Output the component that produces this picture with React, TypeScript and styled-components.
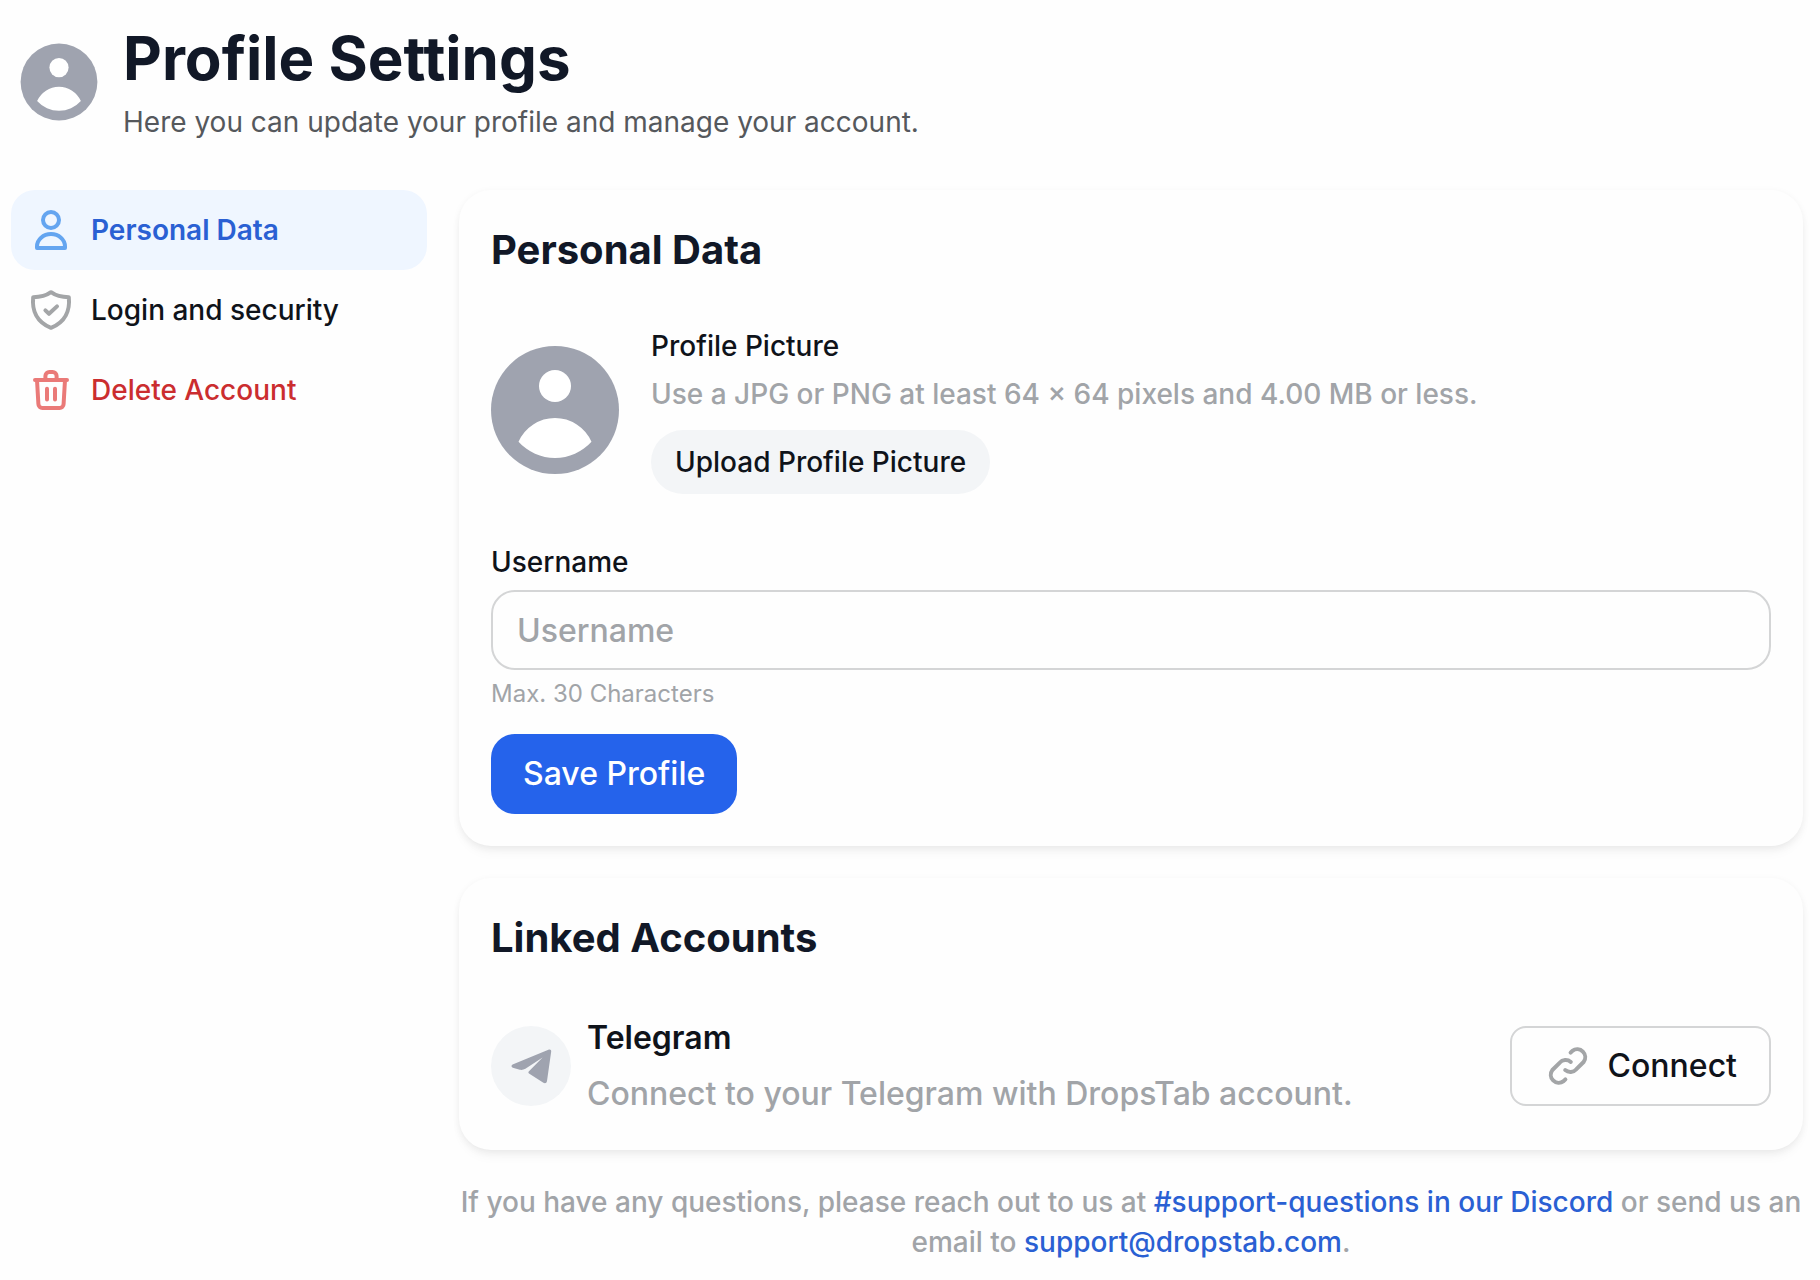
import React, { useState } from "react";
import styled, { createGlobalStyle } from "styled-components";

const color = {
  page: "#fefefe",
  ink: "#111827",
  text: "#0f131a",
  body: "#55585c",
  muted: "#a1a4a8",
  line: "#d4d5d6",
  soft: "#f3f5f7",
  avatar: "#9fa3af",
  primary: "#2563eb",
  link: "#2a60d3",
  danger: "#cb2d2f",
};

const GlobalStyle = createGlobalStyle`
  *, *::before, *::after { box-sizing: border-box; }
  body {
    margin: 0;
    background: ${color.page};
    color: ${color.text};
    font-family: Inter, "Liberation Sans", sans-serif;
    font-size: 28px;
    line-height: 40px;
  }
  h1, h2, h3, p, ul { margin: 0; padding: 0; }
  button, input { font: inherit; color: inherit; }
  svg { display: block; flex: none; }
`;

const Page = styled.div`
  display: flex;
  flex-direction: column;
  gap: 48px;
  padding: 22px 17px 18px 11px;
`;

const Header = styled.header`
  display: flex;
  align-items: center;
  gap: 16px;
`;

const Stack = styled.div`
  display: flex;
  flex-direction: column;
  align-items: flex-start;
  gap: 8px;
`;

const PageTitle = styled.h1`
  font-size: 60px;
  line-height: 72px;
  font-weight: 700;
  color: ${color.ink};
`;

const Subtitle = styled.p`
  color: ${color.body};
`;

const Columns = styled.div`
  display: grid;
  grid-template-columns: 416px minmax(0, 1fr);
  gap: 32px;
  align-items: start;
`;

const NavList = styled.ul`
  list-style: none;
`;

const NavLink = styled.a<{ $tone: string; $active?: boolean }>`
  display: flex;
  align-items: center;
  gap: 16px;
  height: 80px;
  padding: 0 16px;
  border-radius: 24px;
  background: ${({ $active }) => ($active ? "#eff6ff" : "transparent")};
  color: ${({ $tone }) => $tone};
  font-weight: ${({ $active }) => ($active ? 600 : 500)};
  text-decoration: none;
`;

const Main = styled.main`
  display: flex;
  flex-direction: column;
  gap: 32px;
`;

const Card = styled.section`
  display: flex;
  flex-direction: column;
  gap: 48px;
  padding: 32px;
  border-radius: 32px;
  background: ${color.page};
  box-shadow: 0 8px 12px -2px rgba(0, 0, 0, 0.04), 0 2px 8px -1px rgba(0, 0, 0, 0.07);
`;

const CardTitle = styled.h2`
  font-size: 40px;
  line-height: 56px;
  font-weight: 700;
  color: ${color.ink};
`;

const PictureRow = styled.div`
  display: flex;
  align-items: center;
  gap: 32px;
`;

const Label = styled.label`
  font-weight: 500;
`;

const FieldTitle = styled.h3`
  font-size: 28px;
  line-height: 40px;
  font-weight: 500;
`;

const Muted = styled.p`
  color: ${color.muted};
  font-weight: 500;
`;

const PillButton = styled.button`
  height: 64px;
  margin-top: 8px;
  padding: 0 24px;
  border: 0;
  border-radius: 32px;
  background: ${color.soft};
  font-weight: 500;
`;

const Form = styled.form`
  display: flex;
  flex-direction: column;
  align-items: flex-start;
  gap: 8px;
`;

const TextInput = styled.input`
  width: 100%;
  height: 80px;
  padding: 0 24px;
  border: 2px solid ${color.line};
  border-radius: 24px;
  background: transparent;
  font-size: 32px;
  font-weight: 500;
  outline: none;
  &::placeholder {
    color: ${color.muted};
    opacity: 1;
  }
  &:focus-visible {
    border-color: ${color.primary};
  }
`;

const Hint = styled.p`
  font-size: 24px;
  line-height: 32px;
  color: ${color.muted};
`;

const PrimaryButton = styled.button`
  height: 80px;
  margin-top: 16px;
  padding: 0 32px;
  border: 0;
  border-radius: 24px;
  background: ${color.primary};
  color: #fff;
  font-size: 32px;
  font-weight: 500;
`;

const AccountRow = styled.div`
  display: flex;
  align-items: center;
  gap: 16px;
`;

const AccountBadge = styled.div`
  display: grid;
  place-items: center;
  width: 80px;
  height: 80px;
  border-radius: 50%;
  background: ${color.soft};
`;

const AccountText = styled(Stack)`
  flex: 1;
  font-size: 32px;
  line-height: 48px;
`;

const AccountName = styled.h3`
  font-size: 32px;
  line-height: 48px;
  font-weight: 600;
`;

const OutlineButton = styled.button`
  display: flex;
  align-items: center;
  gap: 16px;
  height: 80px;
  padding: 0 32px;
  border: 2px solid ${color.line};
  border-radius: 16px;
  background: transparent;
  font-size: 32px;
  font-weight: 500;
`;

const Support = styled.p`
  color: ${color.muted};
  font-weight: 500;
  text-align: center;
`;

const TextLink = styled.a`
  color: ${color.link};
  text-decoration: none;
`;

function Avatar({ size, inset = 0 }: { size: number; inset?: number }) {
  const box = `${2 - inset} ${2 - inset} ${20 + inset * 2} ${20 + inset * 2}`;
  return (
    <svg width={size} height={size} viewBox={box} aria-hidden="true">
      <circle cx="12" cy="12" r="10" fill={color.avatar} />
      <circle cx="12" cy="8.25" r="2.5" fill="#fff" />
      <path d="M6.3 16.95a6.24 6.24 0 0 1 11.4 0 7.65 7.65 0 0 1-11.4 0Z" fill="#fff" />
    </svg>
  );
}

function LineIcon({ stroke, children }: { stroke: string; children: React.ReactNode }) {
  return (
    <svg
      width="48"
      height="48"
      viewBox="0 0 24 24"
      fill="none"
      stroke={stroke}
      strokeWidth="2"
      strokeLinecap="round"
      strokeLinejoin="round"
      aria-hidden="true"
    >
      {children}
    </svg>
  );
}

const UserIcon = () => (
  <LineIcon stroke="#64a5f0">
    <circle cx="12" cy="7" r="4" />
    <path d="M5 21h14v-.8a7 6.200 0 0 0-14 0Z" />
  </LineIcon>
);

const ShieldIcon = () => (
  <LineIcon stroke="#a3a5a7">
    <path d="M12 3.1c2.6 1.9 5.3 2.5 8.900 2.500.7 6.500-1.700 12.400-8.900 15.300C4.800 18 2.400 12.100 3.100 5.600 6.700 5.600 9.400 5 12 3.100Z" />
    <path d="m9.200 12.200 1.800 1.700 4-3.700" />
  </LineIcon>
);

const TrashIcon = () => (
  <LineIcon stroke="#ea7a78">
    <path d="M4 7h16M5 7l.7 12a2 2 0 0 0 2 2h8.600a2 2 0 0 0 2-2L19 7M9.200 7V5a2 2 0 0 1 2-2h1.600a2 2 0 0 1 2 2v2M10 11.400v5.300M14 11.400v5.300" />
  </LineIcon>
);

const LinkIcon = () => (
  <LineIcon stroke="#a3a5a7">
    <path d="m13.300 5.300.9-.9a4 4 0 0 1 5.600 5.600l-3.600 3.600a4 4 0 0 1-5.600.4" />
    <path d="m10.700 18.700-.9.9a4 4 0 0 1-5.600-5.600l3.600-3.600a4 4 0 0 1 5.600-.4" />
  </LineIcon>
);

const TelegramIcon = () => (
  <svg width="48" height="48" viewBox="0 0 24 24" fill={color.avatar} aria-hidden="true">
    <path d="M2.800 11.300 20.700 3.900c.8-.3 1.500 0 1.400.9L20 19.500c-.2 1.100-1 1.400-1.800.9L11 15.700c-.4-.3-.4-.7 0-1.100l6.800-6.900-8.600 5.700c-.8.500-1.900.7-2.800.5l-3.500-1c-.8-.3-.9-1.200-.1-1.600Z" />
  </svg>
);

export default function App() {
  const [username, setUsername] = useState("");

  return (
    <>
      <GlobalStyle />
      <Page>
        <Header>
          <Avatar size={96} inset={2.5} />
          <Stack>
            <PageTitle>Profile Settings</PageTitle>
            <Subtitle>Here you can update your profile and manage your account.</Subtitle>
          </Stack>
        </Header>

        <Columns>
          <nav aria-label="Settings">
            <NavList>
              <li>
                <NavLink href="#personal" $tone={color.link} $active aria-current="page">
                  <UserIcon />
                  Personal Data
                </NavLink>
              </li>
              <li>
                <NavLink href="#security" $tone={color.text}>
                  <ShieldIcon />
                  Login and security
                </NavLink>
              </li>
              <li>
                <NavLink href="#delete" $tone={color.danger}>
                  <TrashIcon />
                  Delete Account
                </NavLink>
              </li>
            </NavList>
          </nav>

          <Main>
            <Card id="personal">
              <CardTitle>Personal Data</CardTitle>
              <PictureRow>
                <Avatar size={128} />
                <Stack>
                  <FieldTitle>Profile Picture</FieldTitle>
                  <Muted>Use a JPG or PNG at least 64 × 64 pixels and 4.00 MB or less.</Muted>
                  <PillButton type="button">Upload Profile Picture</PillButton>
                </Stack>
              </PictureRow>
              <Form onSubmit={(event) => event.preventDefault()}>
                <Label htmlFor="username">Username</Label>
                <TextInput
                  id="username"
                  placeholder="Username"
                  maxLength={30}
                  aria-describedby="username-hint"
                  value={username}
                  onChange={(event) => setUsername(event.target.value)}
                />
                <Hint id="username-hint">Max. 30 Characters</Hint>
                <PrimaryButton type="submit">Save Profile</PrimaryButton>
              </Form>
            </Card>

            <Card>
              <CardTitle>Linked Accounts</CardTitle>
              <AccountRow>
                <AccountBadge>
                  <TelegramIcon />
                </AccountBadge>
                <AccountText>
                  <AccountName>Telegram</AccountName>
                  <Muted>Connect to your Telegram with DropsTab account.</Muted>
                </AccountText>
                <OutlineButton type="button">
                  <LinkIcon />
                  Connect
                </OutlineButton>
              </AccountRow>
            </Card>

            <Support>
              If you have any questions, please reach out to us at{" "}
              <TextLink href="#discord">#support-questions in our Discord</TextLink> or send us an
              email to <TextLink href="mailto:support@dropstab.com">support@dropstab.com</TextLink>.
            </Support>
          </Main>
        </Columns>
      </Page>
    </>
  );
}
